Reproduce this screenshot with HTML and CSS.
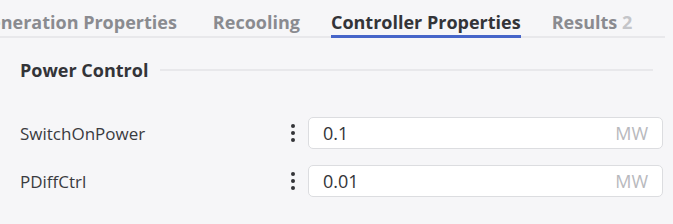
FILE: index.html
```html
<!DOCTYPE html>
<html>
<head>
<meta charset="utf-8">
<link rel="stylesheet" href="styles.css">
</head>
<body>
<div class="tabs">
  <div class="tab-list">
    <div class="tab first">Generation Properties</div>
    <div class="tab">Recooling</div>
    <div class="tab active">Controller Properties</div>
    <div class="tab">Results <span class="count">2</span></div>
  </div>
</div>
<div class="section">
  <div class="section-head">
    <span class="section-title">Power Control</span>
    <span class="section-line"></span>
  </div>
  <div class="rows">
    <div class="row">
      <span class="label">SwitchOnPower</span>
      <span class="kebab"><i></i><i></i><i></i></span>
      <div class="field"><span class="value">0.1</span><span class="unit">MW</span></div>
    </div>
    <div class="row">
      <span class="label">PDiffCtrl</span>
      <span class="kebab"><i></i><i></i><i></i></span>
      <div class="field"><span class="value">0.01</span><span class="unit">MW</span></div>
    </div>
  </div>
</div>
</body>
</html>
```
FILE: styles.css
```css
html, body {
  margin: 0;
  padding: 0;
  background: #f6f6f8;
  font-family: "Open Sans", "Noto Sans", sans-serif;
  color: #333438;
}
.tabs {
  width: 665px;
  height: 38px;
  box-shadow: inset 0 -2px 0 #e8e8eb;
  overflow: hidden;
}
.tab-list {
  display: flex;
  gap: 31px;
  margin-left: -23px;
  height: 38px;
  align-items: flex-end;
}
.tab {
  flex: none;
  font-size: 18px;
  font-weight: 700;
  color: #8a8b90;
  line-height: 22px;
  padding: 0 0 2px;
  border-bottom: 3px solid transparent;
}
.tab.first {
  margin-right: 5px;
}
.tab.active {
  color: #333438;
  border-bottom-color: #4665c9;
}
.tab .count {
  color: #c4c5c9;
}
.section {
  padding: 0 10px 0 20px;
}
.section-head {
  display: flex;
  align-items: center;
  gap: 12px;
  height: 64px;
}
.section-title {
  font-size: 18px;
  font-weight: 700;
  color: #333438;
}
.section-line {
  flex: 1;
  height: 2px;
  margin-right: 10px;
  background: #e8e8eb;
}
.rows {
  padding-top: 7px;
}
.row {
  display: flex;
  align-items: center;
  height: 48px;
}
.label {
  flex: 1;
  font-size: 17px;
  color: #3a3b3f;
}
.kebab {
  display: flex;
  flex-direction: column;
  gap: 3px;
  margin-right: 13px;
}
.kebab i {
  display: block;
  width: 4px;
  height: 4px;
  border-radius: 50%;
  background: #333438;
}
.field {
  width: 355px;
  height: 32px;
  box-sizing: border-box;
  background: #fff;
  border: 1px solid #dcdde0;
  border-radius: 5px;
  display: flex;
  align-items: center;
  justify-content: space-between;
  padding: 0 14px 0 14px;
}
.value {
  font-size: 18px;
  color: #333438;
}
.unit {
  font-size: 18px;
  color: #b8b9bd;
}
```
